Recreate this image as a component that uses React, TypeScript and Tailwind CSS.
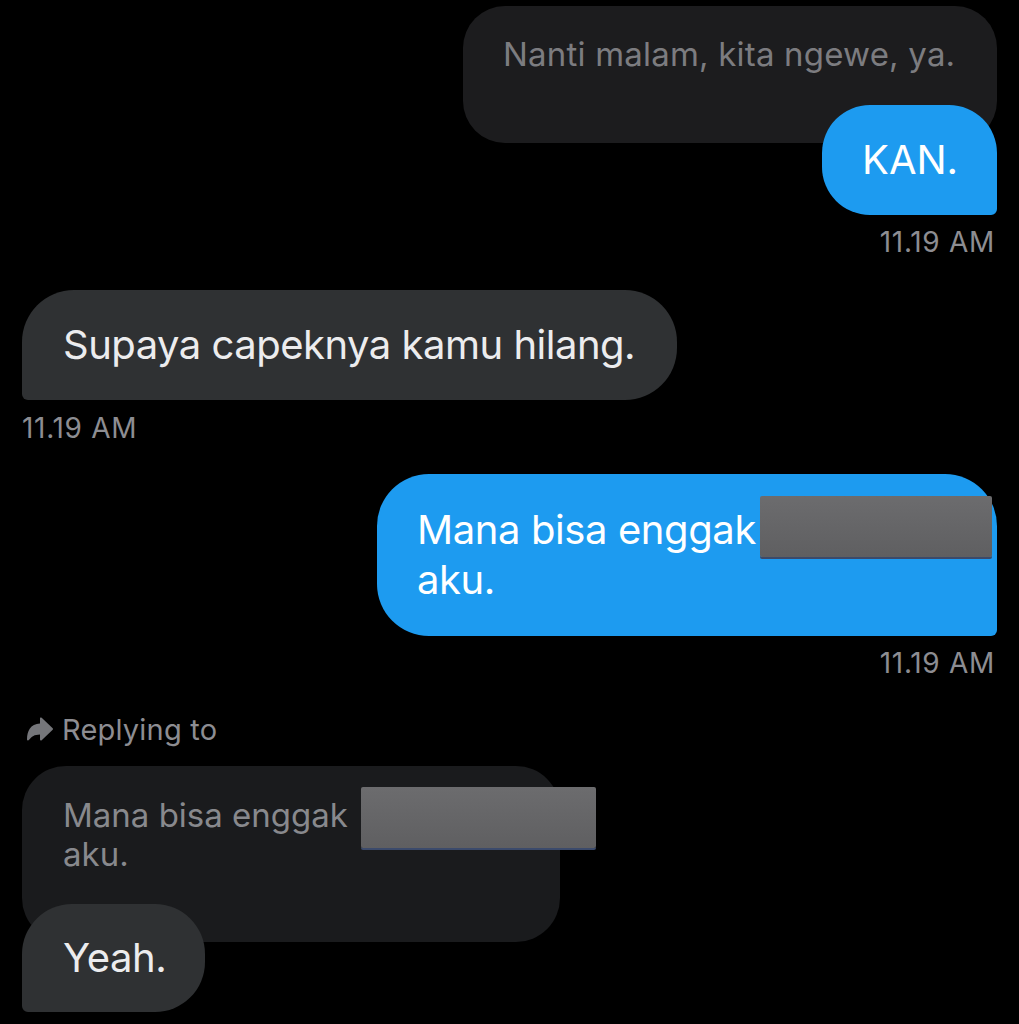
import { IoArrowRedo } from "react-icons/io5";

const font = { fontFamily: "Inter, 'Noto Sans', sans-serif" };

function Redacted({ className }: { className: string }) {
  return (
    <span
      className={`inline-block align-top bg-gradient-to-b from-[#6c6c6e] to-[#5f5f61] shadow-[0_2px_0_#3b4a6b] rounded-[2px] ${className}`}
    />
  );
}

function Stamp({ right }: { right?: boolean }) {
  return (
    <div
      className={`text-[28px] tracking-[0.7px] text-[#8d8d92] leading-none ${
        right ? "self-end pr-[24px]" : "self-start pl-[22px]"
      }`}
    >
      11.19 AM
    </div>
  );
}

export default function App() {
  return (
    <div
      className="w-[1019px] h-[1024px] bg-black overflow-hidden flex flex-col pt-[6px]"
      style={font}
    >
      {/* quoted message + reply */}
      <div className="self-end mr-[22px] w-[534px] h-[137px] rounded-[42px] bg-[#1c1c1e] pl-[40px] pt-[32px]">
        <p className="text-[33px] leading-none text-[#7c7c80] tracking-[0.2px]">
          Nanti malam, kita ngewe, ya.
        </p>
      </div>
      <div className="self-end mr-[22px] -mt-[38px] w-[175px] h-[110px] rounded-[48px] rounded-br-[6px] bg-[#1d9bf0] flex items-center pl-[40px]">
        <span className="text-[40px] text-white leading-none">KAN.</span>
      </div>
      <div className="mt-[13px] flex flex-col">
        <Stamp right />
      </div>

      {/* incoming */}
      <div className="mt-[34px] ml-[22px] w-[655px] h-[110px] rounded-[52px] rounded-bl-[6px] bg-[#2f3133] flex items-center pl-[41px]">
        <span className="text-[40px] text-[#ececee] leading-none tracking-[-0.5px]">
          Supaya capeknya kamu hilang.
        </span>
      </div>
      <div className="mt-[14px] flex flex-col">
        <Stamp />
      </div>

      {/* outgoing two lines */}
      <div className="self-end mr-[22px] mt-[32px] w-[620px] h-[162px] rounded-[52px] rounded-br-[6px] bg-[#1d9bf0] pl-[40px] pt-[31px]">
        <p className="text-[40px] text-white leading-[50px] whitespace-nowrap tracking-[-0.4px]">
          Mana bisa enggak
          <Redacted className="w-[232px] h-[61px] -mt-[9px] -mb-[11px] ml-[4px]" />
          <br />
          aku.
        </p>
      </div>
      <div className="mt-[13px] flex flex-col">
        <Stamp right />
      </div>

      {/* reply */}
      <div className="mt-[36px] ml-[24px] h-[32px] flex items-center gap-[6px] text-[#8d8d92]">
        <IoArrowRedo className="w-[32px] h-[32px] text-[#75767a]" />
        <span className="text-[29px] leading-none tracking-[0.2px]">Replying to</span>
      </div>
      <div className="mt-[21px] ml-[22px] w-[538px] h-[176px] rounded-[44px] bg-[#1a1b1d] pl-[41px] pt-[30px]">
        <p className="text-[33px] text-[#88898d] leading-[39px] whitespace-nowrap">
          Mana bisa enggak
          <Redacted className="w-[235px] h-[61px] -mt-[9px] -mb-[13px] ml-[13px]" />
          <br />
          aku.
        </p>
      </div>
      <div className="-mt-[38px] ml-[22px] w-[183px] h-[108px] rounded-[50px] rounded-bl-[6px] bg-[#2f3133] flex items-center pl-[41px]">
        <span className="text-[40px] text-[#ececee] leading-none tracking-[-0.4px]">Yeah.</span>
      </div>
    </div>
  );
}
